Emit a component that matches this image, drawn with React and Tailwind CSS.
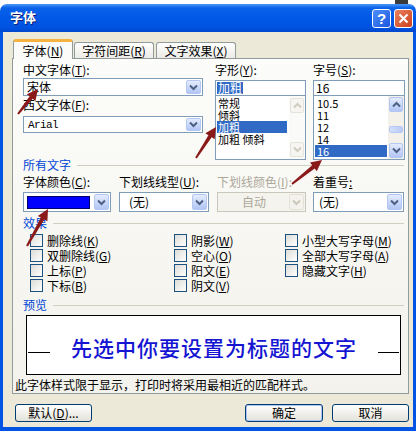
import React from "react";

const FONT = "font-['Noto_Sans_CJK_SC','Noto_Sans',sans-serif]";

function U({ children }) {
  return <span className="underline">{children}</span>;
}

function Chevron({ color, up }) {
  return (
    <svg width="9" height="7" viewBox="0 0 9 7">
      <path
        d={up ? "M1 5.5 L4.5 2 L8 5.5" : "M1 1.5 L4.5 5 L8 1.5"}
        stroke={color}
        strokeWidth="2"
        fill="none"
      />
    </svg>
  );
}

function DropBtn({ disabled }) {
  return (
    <div
      className={
        disabled
          ? "w-[15px] h-full border border-[#E4E2D8] bg-[#F3F2EC] rounded-[2px] flex items-center justify-center"
          : "w-[15px] h-full border border-[#B4C6F2] bg-gradient-to-b from-[#E4ECFD] to-[#B2C5F5] rounded-[2px] flex items-center justify-center"
      }
    >
      <Chevron color={disabled ? "#CAC8BB" : "#4D6185"} />
    </div>
  );
}

function Combo({ className, children, disabled }) {
  return (
    <div
      className={
        className +
        (disabled
          ? " border border-[#C9C7BA] bg-[#F4F3EE] flex items-stretch p-[1px]"
          : " border border-[#7F9DB9] bg-white flex items-stretch p-[1px]")
      }
    >
      <div className="flex-1 flex items-center">{children}</div>
      <DropBtn disabled={disabled} />
    </div>
  );
}

function ScrollBtn({ up, disabled }) {
  return (
    <div
      className={
        disabled
          ? "w-[14px] h-[15px] border border-[#E6E4DA] bg-[#F6F5F1] rounded-[2px] flex items-center justify-center"
          : "w-[14px] h-[15px] border border-[#B4C6F2] bg-gradient-to-b from-[#E4ECFD] to-[#B2C5F5] rounded-[2px] flex items-center justify-center"
      }
    >
      <Chevron color={disabled ? "#CFCDC1" : "#4D6185"} up={up} />
    </div>
  );
}

function Check({ children }) {
  return (
    <div className="h-[15px] flex items-center">
      <div className="w-[13px] h-[13px] border border-[#1C5180] bg-gradient-to-br from-[#DCDCD7] to-white" />
      <span className="ml-[4px] leading-[12px]">{children}</span>
    </div>
  );
}

function GroupLabel({ children }) {
  return (
    <div className="h-[12px] flex items-center">
      <span className="text-[#0046D5] leading-[12px]">{children}</span>
      <div className="flex-1 h-px bg-[#D0D0BF] ml-[6px] mr-[4px]" />
    </div>
  );
}

function arrowPoints(x1, y1, x2, y2) {
  const dx = x2 - x1;
  const dy = y2 - y1;
  const L = Math.hypot(dx, dy);
  const ux = dx / L;
  const uy = dy / L;
  const px = -uy;
  const py = ux;
  const hl = 11;
  const hw = 5.5;
  const sw0 = 1;
  const sw1 = 2;
  const bx = x2 - ux * hl;
  const by = y2 - uy * hl;
  const pts = [
    [x1 + px * sw0, y1 + py * sw0],
    [bx + px * sw1, by + py * sw1],
    [bx + px * hw, by + py * hw],
    [x2, y2],
    [bx - px * hw, by - py * hw],
    [bx - px * sw1, by - py * sw1],
    [x1 - px * sw0, y1 - py * sw0],
  ];
  return pts.map((p) => p[0].toFixed(1) + "," + p[1].toFixed(1)).join(" ");
}

const ARROWS = [
  [18, 114, 38, 89],
  [196, 158, 216, 127],
  [292, 184, 322, 160],
  [27, 246, 48, 209],
];

function XPButton({ className, children, def }) {
  return (
    <div
      className={
        className +
        (def
          ? " h-[18px] rounded-[3px] border border-[#003C74] bg-gradient-to-b from-white to-[#E3E2DA] shadow-[inset_0_0_0_1px_#A9C4F5] flex items-center justify-center leading-[12px]"
          : " h-[18px] rounded-[3px] border border-[#003C74] bg-gradient-to-b from-white to-[#E3E2DA] flex items-center justify-center leading-[12px]")
      }
    >
      {children}
    </div>
  );
}

export default function App() {
  return (
    <div className={`relative w-[416px] h-[431px] bg-white overflow-hidden ${FONT} text-[12px] text-black`}>
      <div className="h-[4px] flex justify-end pr-[8px]">
        <div className="w-[13px] h-[4px] bg-[#3a3a3a]" />
      </div>
      <div className="h-[427px] flex flex-col">
        {/* title bar */}
        <div className="h-[28px] rounded-t-[7px] bg-[linear-gradient(to_bottom,#4C98F6_0%,#0A62E9_14%,#0057E6_55%,#0052E0_85%,#0047CC_100%)] flex items-start pl-[10px] pr-[3px]">
          <span className="mt-[6px] text-white font-bold text-[13px] leading-[14px] [text-shadow:1px_1px_0_#0A1E6E]">字体</span>
          <div className="ml-auto mt-[5px] flex gap-[3px]">
            <div className="w-[19px] h-[19px] rounded-[3px] border border-white bg-gradient-to-br from-[#4F8EF7] to-[#1C55E0] flex items-center justify-center text-white font-bold text-[15px] leading-[15px] font-['Liberation_Sans',sans-serif]">?</div>
            <div className="w-[19px] h-[19px] rounded-[3px] border border-white bg-gradient-to-br from-[#E9805F] to-[#CC3E16] flex items-center justify-center">
              <svg width="11" height="11" viewBox="0 0 11 11">
                <path d="M1.5 1.5 L9.5 9.5 M9.5 1.5 L1.5 9.5" stroke="white" strokeWidth="2" />
              </svg>
            </div>
          </div>
        </div>
        {/* body */}
        <div className="flex-1 bg-[#0054E3] px-[3px] pb-[4px] flex">
          <div className="flex-1 bg-[#ECE9D8] flex flex-col">
            {/* tabs */}
            <div className="h-[26px] pt-[7px] pl-[10px] flex items-end">
              <div className="relative z-10 w-[60px] h-[20px] -mb-[1px] border-x border-[#919B9C] border-t-[3px] border-t-[#F5B23F] rounded-t-[3px] bg-[#FBFBF9] flex items-center justify-center leading-[12px]">
                字体(<U>N</U>)
              </div>
              <div className="ml-[1px] w-[80px] h-[16px] border-x border-t border-[#919B9C] rounded-t-[3px] bg-gradient-to-b from-white to-[#ECEBE6] flex items-center justify-center leading-[12px]">
                字符间距(<U>R</U>)
              </div>
              <div className="ml-[2px] w-[80px] h-[16px] border-x border-t border-[#919B9C] rounded-t-[3px] bg-gradient-to-b from-white to-[#ECEBE6] flex items-center justify-center leading-[12px]">
                文字效果(<U>X</U>)
              </div>
            </div>
            {/* panel */}
            <div className="ml-[9px] w-[397px] h-[336px] border border-[#919B9C] bg-gradient-to-b from-[#FCFCFA] to-[#F3F2EC] pl-[10px] flex flex-col">
              {/* top section */}
              <div className="h-[100px] flex items-start">
                <div className="w-[180px] flex flex-col">
                  <div className="mt-[5px] h-[12px] leading-[12px]">中文字体(<U>T</U>):</div>
                  <Combo className="mt-[2px] h-[18px]">
                    <span className="pl-[2px] leading-[12px]">宋体</span>
                  </Combo>
                  <div className="mt-[3px] h-[12px] leading-[12px]">西文字体(<U>F</U>):</div>
                  <Combo className="mt-[5px] h-[17px]">
                    <span className="pl-[3px] leading-[12px] font-['Liberation_Mono',monospace] text-[11px] tracking-[-0.6px]">Arial</span>
                  </Combo>
                </div>
                <div className="ml-[12px] w-[91px] flex flex-col">
                  <div className="mt-[5px] h-[12px] leading-[12px]">字形(<U>Y</U>):</div>
                  <div className="mt-[4px] h-[16px] border border-[#7F9DB9] bg-white flex items-center pl-[1px]">
                    <span className="bg-[#316AC5] text-white leading-[12px] px-[1px]">加粗</span>
                  </div>
                  <div className="h-[64px] border border-[#7F9DB9] border-t-0 bg-white flex">
                    <div className="flex-1 flex flex-col pt-[1px] pl-[1px] text-[11px]">
                      <div className="h-[12px] leading-[12px] pl-[1px] w-[70px]">常规</div>
                      <div className="h-[12px] leading-[12px] pl-[1px] w-[70px]">倾斜</div>
                      <div className="h-[12px] leading-[12px] pl-[1px] w-[70px] bg-[#316AC5] text-white">加粗</div>
                      <div className="h-[12px] leading-[12px] pl-[1px] w-[70px]">加粗 倾斜</div>
                    </div>
                    <div className="w-[16px] bg-[#FAFAF8] flex flex-col justify-between items-center py-[2px]">
                      <ScrollBtn up disabled />
                      <ScrollBtn disabled />
                    </div>
                  </div>
                </div>
                <div className="ml-[7px] w-[92px] flex flex-col">
                  <div className="mt-[5px] h-[12px] leading-[12px]">字号(<U>S</U>):</div>
                  <div className="mt-[4px] h-[16px] border border-[#7F9DB9] bg-white flex items-center pl-[2px]">
                    <span className="leading-[12px]">16</span>
                  </div>
                  <div className="h-[64px] border border-[#7F9DB9] border-t-0 bg-white flex">
                    <div className="flex-1 flex flex-col pt-[1px] pl-[1px] pr-[1px] text-[11px]">
                      <div className="h-[12px] leading-[12px] pl-[2px]">10.5</div>
                      <div className="h-[12px] leading-[12px] pl-[2px]">11</div>
                      <div className="h-[12px] leading-[12px] pl-[2px]">12</div>
                      <div className="h-[12px] leading-[12px] pl-[2px]">14</div>
                      <div className="h-[12px] leading-[12px] pl-[2px] bg-[#316AC5] text-white">16</div>
                    </div>
                    <div className="w-[16px] bg-[#F3F1EA] flex flex-col items-center py-[1px]">
                      <ScrollBtn up />
                      <div className="flex-1 w-full flex flex-col justify-center items-center">
                        <div className="w-[14px] h-[7px] rounded-[2px] border border-[#B4C6F2] bg-gradient-to-r from-[#D3E0FC] to-[#B9CCF7] mt-[4px]" />
                      </div>
                      <ScrollBtn />
                    </div>
                  </div>
                </div>
              </div>

              <GroupLabel>所有文字</GroupLabel>

              {/* color row */}
              <div className="mt-[5px] flex">
                <div className="w-[96px] flex flex-col">
                  <div className="h-[12px] leading-[12px]">字体颜色(<U>C</U>):</div>
                  <Combo className="mt-[4px] h-[20px] w-[88px]">
                    <div className="ml-[2px] mr-[4px] flex-1 h-[13px] bg-[#0000FF] border border-[#00006A]" />
                  </Combo>
                </div>
                <div className="w-[98px] flex flex-col">
                  <div className="h-[12px] leading-[12px]">下划线线型(<U>U</U>):</div>
                  <Combo className="mt-[4px] h-[20px] w-[90px]">
                    <span className="pl-[8px] leading-[12px]">(无)</span>
                  </Combo>
                </div>
                <div className="w-[96px] flex flex-col">
                  <div className="h-[12px] leading-[12px] text-[#ACA899]">下划线颜色(<U>I</U>):</div>
                  <Combo className="mt-[4px] h-[20px] w-[89px]" disabled>
                    <span className="w-full text-center leading-[12px] text-[#ACA899]">自动</span>
                  </Combo>
                </div>
                <div className="w-[92px] flex flex-col">
                  <div className="h-[12px] leading-[12px]">着重号<U>:</U></div>
                  <Combo className="mt-[4px] h-[20px] w-[91px]">
                    <span className="pl-[4px] leading-[12px]">(无)</span>
                  </Combo>
                </div>
              </div>

              <div className="mt-[5px]">
                <GroupLabel>效果</GroupLabel>
              </div>

              {/* checkboxes */}
              <div className="mt-[4px] ml-[7px] flex">
                <div className="w-[144px] flex flex-col">
                  <Check>删除线(<U>K</U>)</Check>
                  <Check>双删除线(<U>G</U>)</Check>
                  <Check>上标(<U>P</U>)</Check>
                  <Check>下标(<U>B</U>)</Check>
                </div>
                <div className="w-[111px] flex flex-col">
                  <Check>阴影(<U>W</U>)</Check>
                  <Check>空心(<U>O</U>)</Check>
                  <Check>阳文(<U>E</U>)</Check>
                  <Check>阴文(<U>V</U>)</Check>
                </div>
                <div className="flex flex-col">
                  <Check>小型大写字母(<U>M</U>)</Check>
                  <Check>全部大写字母(<U>A</U>)</Check>
                  <Check>隐藏文字(<U>H</U>)</Check>
                </div>
              </div>

              <div className="mt-[6px]">
                <GroupLabel>预览</GroupLabel>
              </div>

              {/* preview */}
              <div className="mt-[4px] ml-[3px] w-[375px] h-[60px] border border-black bg-white flex items-start pt-[20px]">
                <div className="ml-[1px] mt-[16px] w-[22px] h-px bg-black" />
                <div className="flex-1 text-center text-[21px] leading-[22px] font-medium tracking-[1px] text-[#1414D2]">
                  先选中你要设置为标题的文字
                </div>
                <div className="mr-[1px] mt-[16px] w-[21px] h-px bg-black" />
              </div>

              <div className="mt-[4px] -ml-[8px] h-[12px] leading-[12px]">
                此字体样式限于显示，打印时将采用最相近的匹配样式。
              </div>
            </div>

            {/* buttons */}
            <div className="mt-[10px] flex pl-[12px] pr-[4px]">
              <XPButton className="w-[77px]">默认(<U>D</U>)...</XPButton>
              <XPButton className="ml-auto w-[78px]" def>确定</XPButton>
              <XPButton className="ml-[9px] w-[77px]">取消</XPButton>
            </div>
          </div>
        </div>
      </div>

      {/* annotation arrows */}
      <svg className="absolute left-0 top-0 pointer-events-none" width="416" height="431" viewBox="0 0 416 431">
        {ARROWS.map((a, i) => (
          <polygon key={i} points={arrowPoints(a[0], a[1], a[2], a[3])} fill="#8A1A1A" />
        ))}
      </svg>
    </div>
  );
}
